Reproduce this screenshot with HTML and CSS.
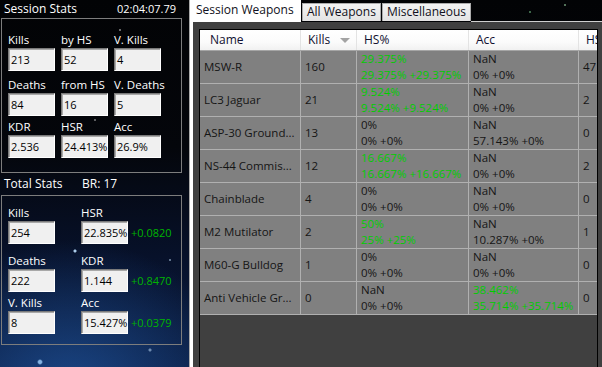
FILE: index.html
```html
<!DOCTYPE html>
<html lang="en">
<head>
    <meta charset="UTF-8">
    <meta name="viewport" content="width=device-width, initial-scale=1.0">
    <title>Session Stats</title>
    <link rel="stylesheet" href="styles.css">
</head>
<body>
    <div class="app">
        <aside class="stats">
            <div class="stats-head"><span>Session Stats</span><span class="clock">02:04:07.79</span></div>
            <div class="group session">
                <div class="field"><label>Kills</label><div class="box">213</div></div>
                <div class="field"><label>by HS</label><div class="box">52</div></div>
                <div class="field"><label>V. Kills</label><div class="box">4</div></div>
                <div class="field"><label>Deaths</label><div class="box">84</div></div>
                <div class="field"><label>from HS</label><div class="box">16</div></div>
                <div class="field"><label>V. Deaths</label><div class="box">5</div></div>
                <div class="field"><label>KDR</label><div class="box">2.536</div></div>
                <div class="field"><label>HSR</label><div class="box">24.413%</div></div>
                <div class="field"><label>Acc</label><div class="box">26.9%</div></div>
            </div>

            <div class="stats-head total-head"><span class="title">Total Stats</span><span>BR: 17</span></div>
            <div class="group total">
                <div class="field"><label>Kills</label><div class="box">254</div></div>
                <div class="field"><label>HSR</label><div class="box-row"><div class="box">22.835%</div><span class="delta">+0.0820</span></div></div>
                <div class="field"><label>Deaths</label><div class="box">222</div></div>
                <div class="field"><label>KDR</label><div class="box-row"><div class="box">1.144</div><span class="delta">+0.8470</span></div></div>
                <div class="field"><label>V. Kills</label><div class="box">8</div></div>
                <div class="field"><label>Acc</label><div class="box-row"><div class="box">15.427%</div><span class="delta">+0.0379</span></div></div>
            </div>
        </aside>

        <main class="weapons">
            <nav class="tabs">
                <div class="tab active">Session Weapons</div>
                <div class="tab">All Weapons</div>
                <div class="tab">Miscellaneous</div>
                <div class="tab-rest"></div>
            </nav>
            <div class="page">
                <div class="panel">
                    <div class="grid">
                        <div class="row head">
                            <div class="cell name">Name</div>
                            <div class="cell sorted">Kills <span class="sort"></span></div>
                            <div class="cell">HS%</div>
                            <div class="cell">Acc</div>
                            <div class="cell">HS</div>
                        </div>

                        <div class="row">
                            <div class="cell">MSW-R</div>
                            <div class="cell">160</div>
                            <div class="cell good"><span>29.375%</span><span>29.375% +29.375%</span></div>
                            <div class="cell"><span>NaN</span><span>0% +0%</span></div>
                            <div class="cell">47</div>
                        </div>
                        <div class="row">
                            <div class="cell">LC3 Jaguar</div>
                            <div class="cell">21</div>
                            <div class="cell good"><span>9.524%</span><span>9.524% +9.524%</span></div>
                            <div class="cell"><span>NaN</span><span>0% +0%</span></div>
                            <div class="cell">2</div>
                        </div>
                        <div class="row">
                            <div class="cell">ASP-30 Ground...</div>
                            <div class="cell">13</div>
                            <div class="cell"><span>0%</span><span>0% +0%</span></div>
                            <div class="cell"><span>NaN</span><span>57.143% +0%</span></div>
                            <div class="cell">0</div>
                        </div>
                        <div class="row">
                            <div class="cell">NS-44 Commis...</div>
                            <div class="cell">12</div>
                            <div class="cell good"><span>16.667%</span><span>16.667% +16.667%</span></div>
                            <div class="cell"><span>NaN</span><span>0% +0%</span></div>
                            <div class="cell">2</div>
                        </div>
                        <div class="row">
                            <div class="cell">Chainblade</div>
                            <div class="cell">4</div>
                            <div class="cell"><span>0%</span><span>0% +0%</span></div>
                            <div class="cell"><span>NaN</span><span>0% +0%</span></div>
                            <div class="cell">0</div>
                        </div>
                        <div class="row">
                            <div class="cell">M2 Mutilator</div>
                            <div class="cell">2</div>
                            <div class="cell good"><span>50%</span><span>25% +25%</span></div>
                            <div class="cell"><span>NaN</span><span>10.287% +0%</span></div>
                            <div class="cell">1</div>
                        </div>
                        <div class="row">
                            <div class="cell">M60-G Bulldog</div>
                            <div class="cell">1</div>
                            <div class="cell"><span>0%</span><span>0% +0%</span></div>
                            <div class="cell"><span>NaN</span><span>0% +0%</span></div>
                            <div class="cell">0</div>
                        </div>
                        <div class="row">
                            <div class="cell">Anti Vehicle Gr...</div>
                            <div class="cell">0</div>
                            <div class="cell"><span>NaN</span><span>0% +0%</span></div>
                            <div class="cell good"><span>38.462%</span><span>35.714% +35.714%</span></div>
                            <div class="cell">0</div>
                        </div>
                    </div>
                </div>
            </div>
        </main>
    </div>
</body>
</html>
```

FILE: styles.css
```css
/* window */
html, body {
    margin: 0;
    padding: 0;
}
body {
    width: 602px;
    height: 367px;
    overflow: hidden;
    font-family: "Open Sans", "Liberation Sans", sans-serif;
    font-size: 11.5px;
    background-color: #03050a;
    background-image:
        radial-gradient(circle at 75px 251px, rgba(190, 225, 255, 0.9) 0 1px, transparent 2px),
        radial-gradient(circle at 40px 362px, rgba(160, 210, 255, 0.8) 0 1.5px, transparent 3px),
        radial-gradient(circle at 150px 350px, rgba(200, 230, 255, 0.5) 0 1px, transparent 2px),
        radial-gradient(circle at 120px 30px, rgba(255, 255, 255, 0.4) 0 0.8px, transparent 1.5px),
        radial-gradient(circle at 95px 120px, rgba(255, 255, 255, 0.35) 0 0.8px, transparent 1.5px),
        radial-gradient(circle at 170px 260px, rgba(200, 230, 255, 0.45) 0 0.8px, transparent 1.5px),
        radial-gradient(circle at 420px 8px, rgba(120, 200, 140, 0.5) 0 0.8px, transparent 1.5px),
        radial-gradient(circle at 530px 12px, rgba(120, 200, 140, 0.5) 0 0.8px, transparent 1.5px),
        radial-gradient(circle at 565px 5px, rgba(160, 220, 170, 0.5) 0 0.8px, transparent 1.5px),
        radial-gradient(ellipse 170px 150px at 70px 390px, rgba(30, 80, 150, 0.8), transparent),
        linear-gradient(#020305 0%, #04060b 40%, #07112a 70%, #0b1d42 100%);
}
.app {
    display: flex;
    height: 100%;
}

/* left stats panel */
.stats {
    width: 189px;
    flex: none;
    color: #fff;
}
.stats-head {
    display: flex;
    justify-content: space-between;
    width: 182px;
    height: 18px;
    line-height: 18px;
    padding: 0 6px 0 4px;
    box-sizing: border-box;
    font-size: 12px;
}
.stats-head .clock {
    font-size: 11px;
}
.total-head {
    height: 22px;
    line-height: 22px;
    justify-content: flex-start;
}
.total-head .title {
    width: 78px;
}
.group {
    width: 181px;
    margin-left: 1px;
    border: 1px solid #7d7d7d;
    box-sizing: border-box;
    display: grid;
    align-content: start;
    padding-left: 6px;
}
.group.session {
    height: 155px;
    padding-top: 12px;
    grid-template-columns: repeat(3, 53px);
    grid-template-rows: 45px 42px 40px;
}
.group.total {
    height: 150px;
    padding-top: 8px;
    grid-template-columns: 73px 100px;
    grid-template-rows: 48px 42px 40px;
}
.field label {
    display: block;
    height: 17px;
    line-height: 17px;
}
.box-row {
    display: flex;
    align-items: center;
}
.box {
    width: 47px;
    height: 23px;
    box-sizing: border-box;
    padding-left: 2px;
    line-height: 21px;
    font-size: 11px;
    color: #000;
    background-color: #f0f0f0;
    border: 1px solid;
    border-color: #7a7a7a #ffffff #ffffff #7a7a7a;
    box-shadow: inset 1px 1px 0 #a8a8a8;
    white-space: nowrap;
}
.delta {
    margin-left: 3px;
    font-size: 11px;
    color: #00b400;
}

/* right weapons panel */
.weapons {
    flex: 1;
    min-width: 0;
    display: flex;
    flex-direction: column;
    font-size: 12px;
}
.tabs {
    display: flex;
    align-items: flex-start;
    height: 22px;
    flex: none;
}
.tab {
    height: 18px;
    line-height: 16px;
    margin: 3px 0 0 1px;
    padding: 0 4px;
    box-sizing: border-box;
    color: #101020;
    background: linear-gradient(#f3f3f3, #e3e3e3);
    border: 1px solid #acacac;
    border-bottom: none;
    white-space: nowrap;
}
.tab.active {
    width: 112px;
    height: 22px;
    line-height: 20px;
    margin: 0;
    padding: 0 6px;
    background: #fff;
    border-color: #a9a9a9;
    border-top: none;
    border-right: none;
}
.tab-rest {
    flex: 1;
    height: 22px;
    box-sizing: border-box;
    border-bottom: 1px solid #cfcfcf;
}
.page {
    flex: 1;
    display: flex;
    min-height: 0;
    background-color: #fff;
    border-left: 1px solid #a9a9a9;
    padding-left: 3px;
}
.panel {
    flex: 1;
    min-width: 0;
    display: flex;
    background-color: #404040;
    padding: 7px 4px 0 6px;
}
.grid {
    flex: 1;
    min-width: 0;
    overflow: hidden;
    background-color: #404040;
    border: 1px solid #000;
    border-bottom: none;
    font-size: 11.5px;
}
.row {
    display: grid;
    grid-template-columns: 101px 56px 112px 110px 60px;
    height: 33px;
    box-sizing: border-box;
    background-color: #808080;
    border-bottom: 1px solid #b0b0b0;
    color: #151515;
}
.cell {
    display: flex;
    flex-direction: column;
    justify-content: center;
    padding-left: 4px;
    border-right: 1px solid #b0b0b0;
    line-height: 16px;
    white-space: nowrap;
    overflow: hidden;
}
.cell.good {
    color: #00cc00;
}
.row.head {
    height: 21px;
    background: linear-gradient(#ffffff 0%, #fbfbfb 60%, #f1f1f1 100%);
    border-bottom: 1px solid #a5a5a5;
    color: #101030;
    font-size: 12px;
}
.row.head .cell {
    padding-left: 7px;
    border-right-color: #e3e3e3;
}
.row.head .cell.name {
    padding-left: 10px;
}
.row.head .cell.sorted {
    flex-direction: row;
    align-items: center;
    justify-content: flex-start;
}
.sort {
    margin-left: 10px;
    width: 0;
    height: 0;
    border-left: 5px solid transparent;
    border-right: 5px solid transparent;
    border-top: 5px solid #a3a3a3;
}
```
